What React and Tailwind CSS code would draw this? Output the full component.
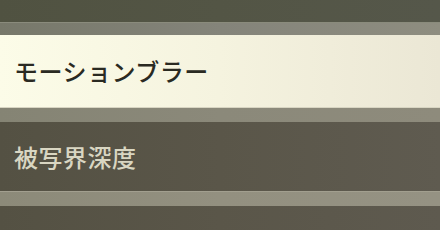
export default function App() {
  const font = { fontFamily: '"Noto Sans CJK JP", "Noto Sans", sans-serif' }
  return (
    <div className="w-[440px] h-[230px] overflow-hidden flex flex-col bg-[#555244]" style={font}>
      <div className="h-[22px] shrink-0 bg-gradient-to-r from-[#505241] via-[#535545] to-[#55574a]" />
      <div className="h-[13px] shrink-0 border-t border-[#8a8b7c] bg-gradient-to-r from-[#77786a] via-[#84847a] to-[#8e8d80]" />
      <div className="h-[73px] shrink-0 flex items-center pl-[14px] bg-gradient-to-r from-[#fcfce8] via-[#f5f3df] to-[#ebe7d5] border-b border-[#d8d5c2]">
        <span className="text-[24px] leading-none font-medium tracking-[0.5px] text-[#2a2a22]">モーションブラー</span>
      </div>
      <div className="h-[14px] shrink-0 bg-gradient-to-r from-[#858474] via-[#8b897a] to-[#8e8b7c]" />
      <div className="h-[69px] shrink-0 flex items-center pl-[14px] bg-gradient-to-r from-[#545143] via-[#5a5649] to-[#5f5b50]">
        <span className="text-[24px] leading-none font-medium tracking-[0.5px] text-[#d9d6c2]">被写界深度</span>
      </div>
      <div className="h-[15px] shrink-0 border-t border-[#a29f8f] bg-gradient-to-r from-[#8c8a79] via-[#939080] to-[#959283]" />
      <div className="flex-1 bg-gradient-to-r from-[#545143] via-[#5a5649] to-[#5e5a4f]" />
    </div>
  )
}
